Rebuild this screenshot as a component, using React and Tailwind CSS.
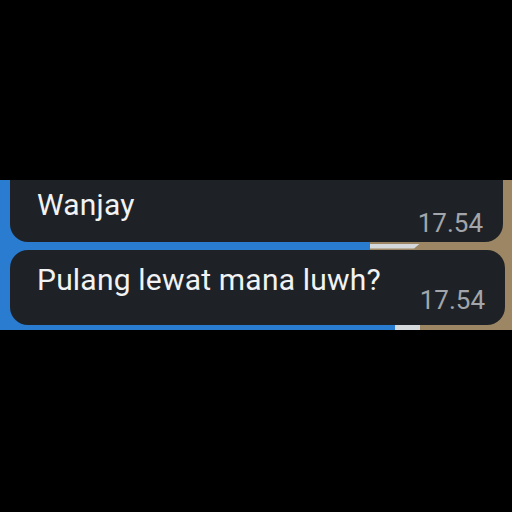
export default function App() {
  const font = { fontFamily: 'Roboto, "Noto Sans", sans-serif' }

  return (
    <div className="w-[512px] h-[512px] bg-black flex flex-col" style={font}>
      <div className="h-[180px]" />

      <div className="h-[150px] flex flex-col bg-[#9c8663]">
        {/* first bubble, top cut off */}
        <div className="h-[62px] flex bg-[linear-gradient(90deg,#2a7cd0_50%,#9c8663_50%)]">
          <div className="w-[10px]" />
          <div className="flex-1 flex justify-between bg-[#1e2227] rounded-b-[18px] pl-[27px] pr-[20px]">
            <span className="pt-[8px] leading-[34px] text-[30px] tracking-[0.2px] text-[#f1f2f3]">Wanjay</span>
            <span className="self-end mb-[4px] leading-[30px] text-[26px] text-[#a2a6ab]">17.54</span>
          </div>
          <div className="w-[9px]" />
        </div>

        <div className="h-[8px] flex items-center">
          <div className="w-[370px] h-full bg-[#2a7cd0]" />
          <div className="w-[50px] h-[5px] bg-[#d6d9db] [clip-path:polygon(0_0,100%_0,88%_100%,0_100%)]" />
          <div className="flex-1" />
        </div>

        {/* second bubble */}
        <div className="h-[75px] flex bg-[linear-gradient(90deg,#2a7cd0_50%,#9c8663_50%)]">
          <div className="w-[10px]" />
          <div className="flex-1 flex justify-between bg-[#1e2227] rounded-[18px] pl-[27px] pr-[20px]">
            <span className="pt-[13px] leading-[34px] text-[30px] tracking-[0.2px] text-[#f1f2f3]">Pulang lewat mana luwh?</span>
            <span className="self-end mb-[10px] leading-[30px] text-[26px] text-[#a2a6ab]">17.54</span>
          </div>
          <div className="w-[7px]" />
        </div>

        <div className="flex-1 flex">
          <div className="w-[395px] bg-[#2a7cd0]" />
          <div className="w-[25px] bg-[#d6d9db]" />
          <div className="flex-1" />
        </div>
      </div>
    </div>
  )
}
